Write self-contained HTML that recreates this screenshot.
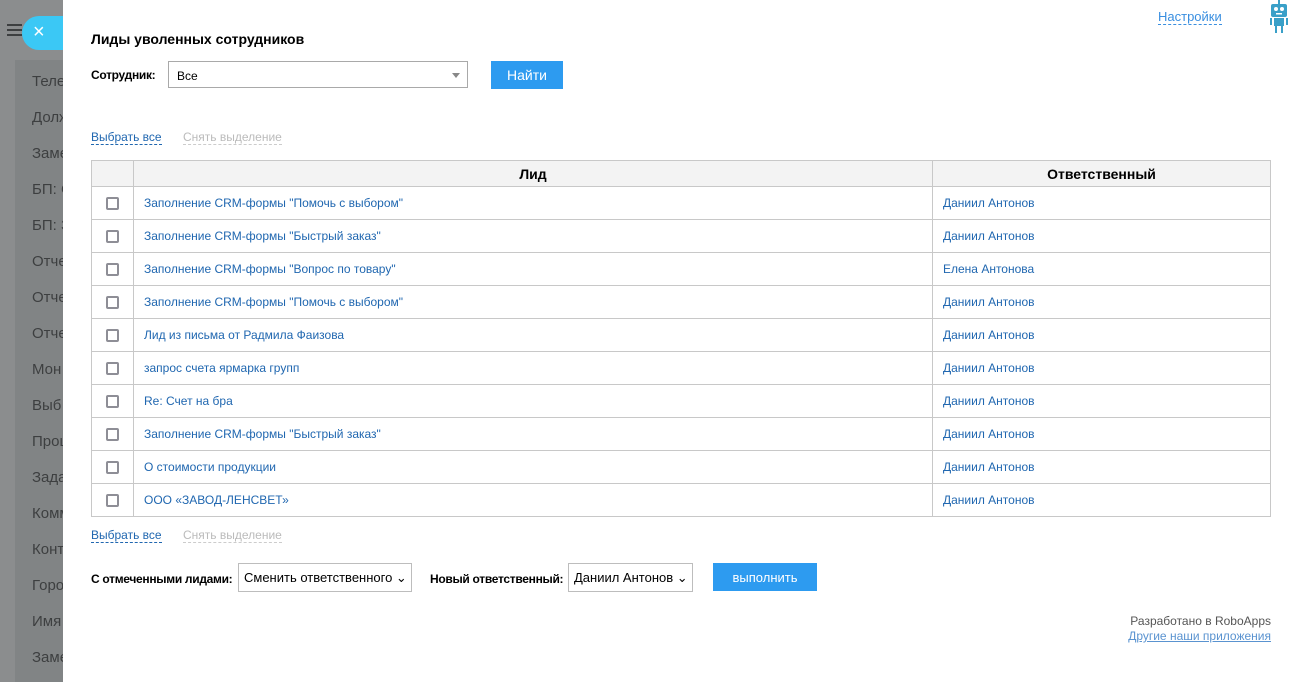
<!DOCTYPE html>
<html><head><meta charset="utf-8"><style>
*{box-sizing:border-box;margin:0;padding:0}
body{width:1296px;height:682px;overflow:hidden;background:#fff;font-family:"Liberation Sans",Arial,sans-serif;position:relative;font-size:12px}
.ov{position:absolute;left:0;top:0;width:63px;height:682px;background:#8b8d8e;overflow:hidden}
.ov .pn{position:absolute;left:15px;top:60px;width:60px;height:640px;background:#818485}
.ov .it{position:absolute;left:32px;font-size:15px;color:#3d3f40;white-space:nowrap}
.ham{position:absolute;left:7px;top:24px;width:15px}
.ham i{display:block;height:2px;background:#3d3f40;margin-bottom:3px}
.cls{position:absolute;left:22px;top:16px;width:41px;height:34px;border-radius:17px 0 0 17px;background:#3bc8f5;color:#fff;font-size:20px;line-height:33px;padding-left:11px}
.a{position:absolute;white-space:nowrap}
h1{position:absolute;left:91px;top:31px;font-size:14px;font-weight:bold;color:#000}
.sel{position:absolute;left:168px;top:61px;width:300px;height:27px;border:1px solid #a9a9a9;font-size:12px;padding:7px 8px;color:#000}
.sel:after{content:"";position:absolute;right:7px;top:11px;border:4px solid transparent;border-top:5px solid #888}
.btn{position:absolute;background:#2d9bf0;color:#fff;text-align:center}
.lnk{color:#2067b0;border-bottom:1px dashed #2067b0}
.dis{color:#bbb;border-bottom:1px dashed #ccc}
table{position:absolute;left:91px;top:160px;width:1180px;border-collapse:collapse}
td,th{border:1px solid #c8c8c8;height:33px;font-size:12px;color:#2067b0;padding-left:10px;text-align:left}
th{height:26px;background:#f3f3f3;color:#000;font-size:14px;text-align:center;padding:0}
td.c{padding:0;text-align:center}
.cb{display:inline-block;width:13px;height:13px;border:2px solid #8e8e96;border-radius:2px;vertical-align:middle}
.dd{position:absolute;top:563px;height:29px;border:1px solid #bdbdbd;font-size:13px;padding:6px 5px;color:#000;white-space:nowrap}
.b{font-weight:bold;letter-spacing:-0.3px}
</style></head><body>
<div class="ov"><div class="pn"></div>
<div class="it" style="top:73px">Телефон</div><div class="it" style="top:109px">Должность</div><div class="it" style="top:145px">Заметки</div><div class="it" style="top:181px">БП: С</div><div class="it" style="top:217px">БП: З</div><div class="it" style="top:253px">Отчет</div><div class="it" style="top:289px">Отчет</div><div class="it" style="top:325px">Отчет</div><div class="it" style="top:361px">Мон</div><div class="it" style="top:397px">Выб</div><div class="it" style="top:433px">Проц</div><div class="it" style="top:469px">Зада</div><div class="it" style="top:505px">Комм</div><div class="it" style="top:541px">Конт</div><div class="it" style="top:577px">Горо</div><div class="it" style="top:613px">Имя</div><div class="it" style="top:649px">Заме</div>
</div>
<div class="ham"><i></i><i></i><i></i></div>
<div class="cls">×</div>
<div class="a lnk" style="left:1158px;top:9px;font-size:13px;color:#3a8fe0;border-color:#3a8fe0">Настройки</div>
<svg class="a" style="left:1268px;top:0" width="22" height="34" viewBox="0 0 22 34" fill="#3aa0c8"><rect x="10" y="0" width="2" height="4"/><rect x="3" y="4" width="16" height="13" rx="2"/><circle cx="8" cy="9" r="2" fill="#fff"/><circle cx="14" cy="9" r="2" fill="#fff"/><rect x="8" y="13" width="6" height="1.5" fill="#fff"/><rect x="6" y="18" width="10" height="8"/><rect x="2" y="18" width="2" height="7"/><rect x="18" y="18" width="2" height="7"/><rect x="7" y="26" width="2" height="7"/><rect x="13" y="26" width="2" height="7"/></svg>
<h1>Лиды уволенных сотрудников</h1>
<div class="a b" style="left:91px;top:68px">Сотрудник:</div>
<div class="sel">Все</div>
<div class="btn" style="left:491px;top:61px;width:72px;height:28px;line-height:28px;font-size:14px">Найти</div>
<div class="a lnk" style="left:91px;top:130px">Выбрать все</div>
<div class="a dis" style="left:183px;top:130px">Снять выделение</div>
<table>
<tr><th style="width:42px"></th><th style="width:799px">Лид</th><th>Ответственный</th></tr>
<tr><td class="c"><span class="cb"></span></td><td>Заполнение CRM-формы "Помочь с выбором"</td><td>Даниил Антонов</td></tr>
<tr><td class="c"><span class="cb"></span></td><td>Заполнение CRM-формы "Быстрый заказ"</td><td>Даниил Антонов</td></tr>
<tr><td class="c"><span class="cb"></span></td><td>Заполнение CRM-формы "Вопрос по товару"</td><td>Елена Антонова</td></tr>
<tr><td class="c"><span class="cb"></span></td><td>Заполнение CRM-формы "Помочь с выбором"</td><td>Даниил Антонов</td></tr>
<tr><td class="c"><span class="cb"></span></td><td>Лид из письма от Радмила Фаизова</td><td>Даниил Антонов</td></tr>
<tr><td class="c"><span class="cb"></span></td><td>запрос счета ярмарка групп</td><td>Даниил Антонов</td></tr>
<tr><td class="c"><span class="cb"></span></td><td>Re: Счет на бра</td><td>Даниил Антонов</td></tr>
<tr><td class="c"><span class="cb"></span></td><td>Заполнение CRM-формы "Быстрый заказ"</td><td>Даниил Антонов</td></tr>
<tr><td class="c"><span class="cb"></span></td><td>О стоимости продукции</td><td>Даниил Антонов</td></tr>
<tr><td class="c"><span class="cb"></span></td><td>ООО «ЗАВОД-ЛЕНСВЕТ»</td><td>Даниил Антонов</td></tr>
</table>
<div class="a lnk" style="left:91px;top:528px">Выбрать все</div>
<div class="a dis" style="left:183px;top:528px">Снять выделение</div>
<div class="a b" style="left:91px;top:572px">С отмеченными лидами:</div>
<div class="dd" style="left:238px;width:174px">Сменить ответственного ⌄</div>
<div class="a b" style="left:430px;top:572px">Новый ответственный:</div>
<div class="dd" style="left:568px;width:125px">Даниил Антонов ⌄</div>
<div class="btn" style="left:713px;top:563px;width:104px;height:28px;line-height:29px;font-size:13px">выполнить</div>
<div class="a" style="right:25px;top:614px;color:#555">Разработано в RoboApps</div>
<div class="a" style="right:25px;top:629px;color:#5a93d0;text-decoration:underline">Другие наши приложения</div>
</body></html>
